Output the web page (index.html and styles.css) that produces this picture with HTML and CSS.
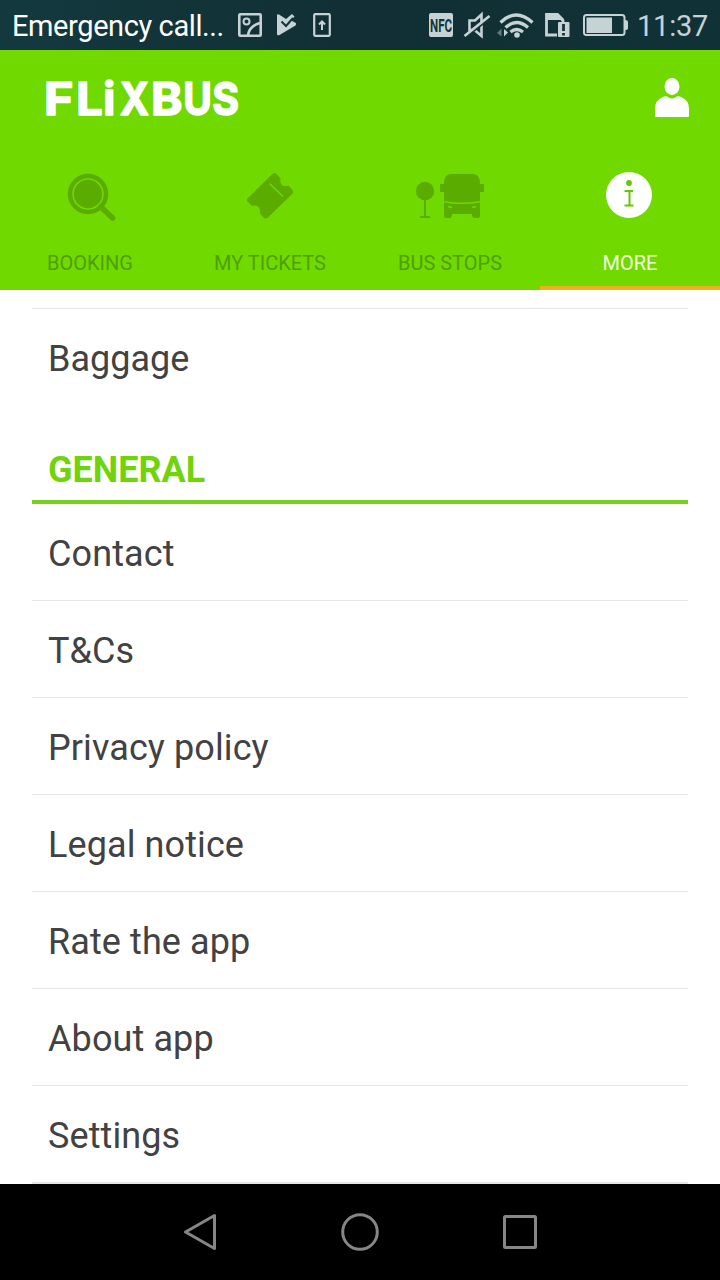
FILE: index.html
```html
<!DOCTYPE html>
<html lang="en">
<head>
    <meta charset="UTF-8">
    <meta name="viewport" content="width=device-width, initial-scale=1.0">
    <title>FlixBus</title>
    <link rel="stylesheet" href="styles.css">
</head>
<body>
    <div class="status-bar">
        <span class="carrier">Emergency call...</span>
        <svg class="status-icons-left" width="94" height="26" viewBox="238 12 94 26">
            <!-- Picture -->
            <rect x="239.3" y="14.3" width="21.4" height="21.4" rx="1" fill="none" stroke="#c5d3d5" stroke-width="2.6"/>
            <circle cx="246.500" cy="21.500" r="3" fill="none" stroke="#c5d3d5" stroke-width="2"/>
            <path d="M248 35c1-6 5-10 12-12" fill="none" stroke="#c5d3d5" stroke-width="2.6"/>
            <!-- Play check -->
            <path d="M277 15.500q0-2 2-1l7 4.500 6-5 2.500 2.500-3.500 4 4.500 2.200q1.500 1.300 0 2.800L279.500 35q-2.500 1-2.500-1z" fill="#c5d3d5"/>
            <path d="M281.500 21.500l4.500 4.500 7-8" fill="none" stroke="#12343a" stroke-width="2"/>
            <!-- Update -->
            <rect x="314.200" y="14.200" width="15.600" height="21.600" rx="1" fill="none" stroke="#c5d3d5" stroke-width="2.200"/>
            <path d="M322 30v-8m-3 2.500l3-3 3 3" fill="none" stroke="#c5d3d5" stroke-width="2"/>
        </svg>
        <svg class="status-icons-right" width="202" height="28" viewBox="428 11 202 28">
            <!-- NFC -->
            <rect x="429" y="13" width="24" height="24" rx="2" fill="#c5d3d5"/>
            <text class="nfc" x="430" y="32" textLength="22" lengthAdjust="spacingAndGlyphs">NFC</text>
            <!-- Muted -->
            <path d="M469.500 20.500h5.500l6.500-6v21.500l-7-6h-5z" fill="none" stroke="#c5d3d5" stroke-width="2.600"/>
            <path d="M466 37l23-18" stroke="#12343a" stroke-width="2"/>
            <path d="M464.500 36l25-20" stroke="#c5d3d5" stroke-width="2.600"/>
            <!-- Wifi -->
            <g fill="none" stroke="#c5d3d5" stroke-width="3.300">
                <path d="M500.500 22.500q15.500-15 32 0"/>
                <path d="M505.500 27.500q11-10 22.500 0"/>
                <path d="M510.500 32q6-5 12.500 0"/>
            </g>
            <circle cx="517" cy="35" r="2.800" fill="#c5d3d5"/>
            <path d="M497 33l4.500-4.500v8z" fill="#5f7a7d"/>
            <path d="M504 29l4 3.500-4 4z" fill="#c5d3d5"/>
            <!-- Sim warning -->
            <path d="M557 35h-10.500V14.500h10.500l6 6v2" fill="none" stroke="#c5d3d5" stroke-width="2.800"/>
            <path d="M546 13h12l6 6v1h-18z" fill="#c5d3d5"/>
            <rect x="558" y="22" width="11.500" height="15" rx="1" fill="#c5d3d5"/>
            <path d="M563.500 24v7m0 2v2.500" stroke="#12343a" stroke-width="2.800"/>
            <!-- Battery -->
            <rect x="584" y="15" width="40.500" height="20" rx="2.500" fill="none" stroke="#c5d3d5" stroke-width="2"/>
            <rect x="586.500" y="17.500" width="25.500" height="15.500" fill="#c5d3d5"/>
            <path d="M625 20q3 0 3 2v6q0 2-3 2z" fill="#c5d3d5"/>
        </svg>
        <span class="clock">11:37</span>
    </div>

    <header class="header">
        <div class="top-row">
            <svg class="logo" width="210" height="70" viewBox="40 63 210 70">
                <text y="115"><tspan x="44.100" textLength="29.500" lengthAdjust="spacingAndGlyphs">F</tspan><tspan x="76.200" textLength="26.500" lengthAdjust="spacingAndGlyphs">L</tspan><tspan x="103.300" textLength="12" lengthAdjust="spacingAndGlyphs">i</tspan><tspan x="120" textLength="29" lengthAdjust="spacingAndGlyphs">X</tspan><tspan x="151" textLength="31.500" lengthAdjust="spacingAndGlyphs">B</tspan><tspan x="183.200" textLength="28.600" lengthAdjust="spacingAndGlyphs">U</tspan><tspan x="212.200" textLength="26.800" lengthAdjust="spacingAndGlyphs">S</tspan></text>
            </svg>
            <svg class="profile" width="34" height="40" viewBox="0 0 34 40">
                <path d="M0 38V31q0-9 8-12 2-1 4-.5 5 4 10 0 2-.5 4 .5 8 3 8 12v7q0 1-1 1H1q-1 0-1-1z"/>
                <ellipse cx="17" cy="8.500" rx="7.500" ry="8.500"/>
            </svg>
        </div>
        <nav class="tabs">
            <div class="tab">
                <svg class="tab-icon" width="180" height="52" viewBox="0 170 180 52">
                    <circle cx="88" cy="194" r="18" fill="none" stroke="#5bac00" stroke-width="4.500"/>
                    <circle cx="88" cy="194" r="14.200" fill="#5bac00"/>
                    <path d="M101 207l11.500 11" stroke="#5bac00" stroke-width="5.500" stroke-linecap="round"/>
                </svg>
                <span class="tab-label">BOOKING</span>
            </div>
            <div class="tab">
                <svg class="tab-icon" width="180" height="52" viewBox="180 170 180 52">
                    <path d="M272.500 174q2-2 4 0l4 4.500c-1 6 2 9 8 7l3.500 4q2 2.500 0 4.500L268 217.500q-2 2-4.500 0l-3.500-4c1-6-3-9.500-8-7.500l-4-4q-2-2 0-4z" fill="#5bac00"/>
                    <path d="M270 184l12.500 12" stroke="#70d900" stroke-width="1.500" stroke-linecap="round"/>
                </svg>
                <span class="tab-label">MY TICKETS</span>
            </div>
            <div class="tab">
                <svg class="tab-icon" width="180" height="52" viewBox="360 170 180 52">
                    <g fill="#5bac00">
                        <circle cx="425" cy="191" r="9.200"/>
                        <path d="M424 199h2v17h4v2h-10v-2h4z"/>
                        <path d="M451 174h22q7 0 7 10h4v8h-4v9q-18 3-36 0v-9h-4v-8h4q0-10 7-10z"/>
                        <path d="M444 202.500q18 3 36 0v13q0 2.500-2.500 2.500h-3q-2.500 0-2.500-4h-20q0 4-2.500 4h-3q-2.500 0-2.500-2.500z"/>
                    </g>
                    <path d="M448 206.500l4 1M476 206.500l-4 1" stroke="#70d900" stroke-width="1.800"/>
                </svg>
                <span class="tab-label">BUS STOPS</span>
            </div>
            <div class="tab active">
                <svg class="tab-icon" width="180" height="52" viewBox="540 170 180 52">
                    <circle cx="629" cy="195" r="23" fill="#fff"/>
                    <circle cx="629" cy="183" r="2.900" fill="#67c800"/>
                    <path d="M624.500 191h5v14.500m-5 0h9" fill="none" stroke="#67c800" stroke-width="2"/>
                    <path d="M629 191h4" stroke="#67c800" stroke-width="2"/>
                </svg>
                <span class="tab-label">MORE</span>
            </div>
        </nav>
    </header>

    <main class="content">
        <div class="list-item baggage">Baggage</div>
        <h2 class="section-title">GENERAL</h2>
        <div class="list-item">Contact</div>
        <div class="list-item">T&amp;Cs</div>
        <div class="list-item">Privacy policy</div>
        <div class="list-item">Legal notice</div>
        <div class="list-item">Rate the app</div>
        <div class="list-item">About app</div>
        <div class="list-item last">Settings</div>
    </main>

    <footer class="nav-bar">
        <svg width="160" height="96" viewBox="120 1184 160 96">
            <path d="M214.500 1215.500v33l-29-16.500z"/>
        </svg>
        <svg width="160" height="96" viewBox="280 1184 160 96">
            <circle cx="360" cy="1232" r="17.300"/>
        </svg>
        <svg width="160" height="96" viewBox="440 1184 160 96">
            <rect x="504.500" y="1216.500" width="31" height="31" rx="1"/>
        </svg>
    </footer>
</body>
</html>
```
FILE: styles.css
```css
/* Basic reset and global styles */
* {
    margin: 0;
    padding: 0;
    box-sizing: border-box;
}
body {
    width: 720px;
    height: 1280px;
    display: flex;
    flex-direction: column;
    overflow: hidden;
    font-family: Roboto, sans-serif;
    background-color: #fff;
    color: #424242;
}
svg {
    display: block;
    flex-shrink: 0;
}
/* Status bar */
.status-bar {
    height: 50px;
    flex-shrink: 0;
    display: flex;
    align-items: center;
    padding: 0 0 0 12px;
    background: linear-gradient(90deg, #13393e, #112f34 50%, #103236);
    color: #fff;
    white-space: nowrap;
}
.carrier {
    flex-shrink: 0;
    width: 226px;
    font-size: 29px;
    letter-spacing: -0.4px;
    line-height: 48px;
    padding-top: 2px;
}
.status-icons-right {
    margin-left: 96px;
}
.nfc {
    font-size: 19px;
    font-weight: 700;
    fill: #12343a;
}
.clock {
    margin-left: 7px;
    padding-top: 2px;
    font-size: 29px;
    line-height: 48px;
    letter-spacing: -0.2px;
    color: #c5d3d5;
}
/* Green header */
.header {
    height: 240px;
    flex-shrink: 0;
    background-color: #70d900;
}
.top-row {
    height: 100px;
    display: flex;
    justify-content: space-between;
    align-items: center;
    padding: 0 31px 4px 40px;
}
.logo text {
    font-family: Inter, sans-serif;
    font-size: 45px;
    font-weight: 700;
    fill: #fff;
    stroke: #fff;
    stroke-width: 1.6px;
    stroke-linejoin: round;
}
.profile {
    fill: #fff;
}
/* Tabs */
.tabs {
    height: 140px;
    display: flex;
}
.tab {
    width: 180px;
    padding-top: 20px;
    text-align: center;
    color: #4f9f00;
    border-bottom: 4px solid transparent;
}
.tab.active {
    color: #f0ffd8;
    border-bottom-color: #ecb11c;
}
.tab-label {
    display: block;
    margin-top: 29px;
    font-size: 20px;
    line-height: 25px;
}
/* List */
.content {
    flex: 1;
    padding: 18px 32px 0;
    min-height: 0;
}
.list-item {
    height: 97px;
    padding: 2px 16px 0;
    border-bottom: 1px solid #e6e6e6;
    font-size: 36px;
    line-height: 96px;
    letter-spacing: 0.1px;
}
.list-item.baggage {
    border-top: 1px solid #e6e6e6;
    border-bottom: none;
    letter-spacing: 0;
}
.list-item.last {
    height: 98px;
    border-bottom-width: 2px;
}
.section-title {
    height: 99px;
    padding: 44px 16px 0;
    border-bottom: 4px solid #78d01e;
    font-size: 36px;
    line-height: 42px;
    font-weight: 700;
    color: #70d30c;
}
/* Android navigation */
.nav-bar {
    height: 96px;
    flex-shrink: 0;
    display: flex;
    justify-content: center;
    background-color: #000;
}
.nav-bar svg {
    fill: none;
    stroke: #868686;
    stroke-width: 3px;
    stroke-linejoin: round;
}
```
